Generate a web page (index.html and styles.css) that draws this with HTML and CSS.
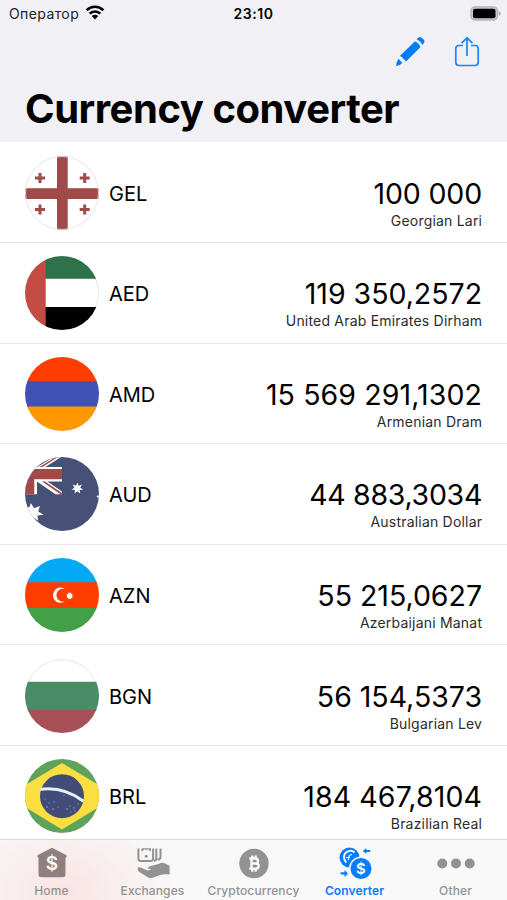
FILE: index.html
```html
<!DOCTYPE html>
<html lang="en">
<head>
<meta charset="utf-8">
<title>Currency converter</title>
<link rel="stylesheet" href="styles.css">
</head>
<body>
<div class="app">
  <header class="header">
    <div class="status">
      <div class="carrier"><span>Оператор</span>
        <svg class="wifi" width="20" height="15" viewBox="0 0 20 15"><g fill="none" stroke="#000" stroke-width="2.6"><path d="M1.6 5.2a12 12 0 0 1 16.8 0"/><path d="M4.7 8.6a7.6 7.6 0 0 1 10.6 0"/></g><path d="M6.8 11a4.6 4.6 0 0 1 6.4 0L10 14.4z"/></svg>
      </div>
      <div class="clock">23:10</div>
      <svg class="battery" width="31" height="15" viewBox="0 0 31 15"><rect x="1" y=".8" width="26.500" height="13.400" rx="4" fill="#c9c9cb" stroke="#b5b5b7" stroke-width="1.300"/><rect x="3" y="2.800" width="22.500" height="9.400" rx="2" fill="#000"/><path d="M28.800 5q2 .7 2 2.500t-2 2.500z" fill="#a9a9ab"/></svg>
    </div>
    <div class="actions">
      <svg width="32" height="32" viewBox="0 0 32 32" fill="#007aff"><path d="M22.600 3.200l2-1.700q1.600-1.100 3.200.4l1.800 1.700q1.600 1.600.5 3.200l-1.900 2.300q-1-3.700-5.600-5.900zM20.800 5.600q4 1.400 5.700 5.500L12 25.400q-1.200-.3-1.500-2-1.800-.3-2.100-2.100-1.700-.3-2.300-1.500zM4.600 22.800l3.700 4.300q-2.100 2.500-6.200 2.800.2-4.200 2.500-7.100z"/></svg>
      <svg width="26" height="32" viewBox="0 0 26 32" fill="none" stroke="#1a86fb" stroke-width="1.700"><path d="M9 9.500H5Q1.800 9.500 1.800 12.700v13.600Q1.800 29.500 5 29.500h16q3.200 0 3.200-3.200V12.700q0-3.200-3.200-3.200h-4"/><path d="M13 20V2.200M7.600 7.200L13 1.800l5.400 5.400"/></svg>
    </div>
    <h1>Currency converter</h1>
  </header>

  <main class="list">
    <div class="row">
      <svg class="flag" viewBox="0 0 74 74"><path fill="#fff" d="M0 0h74v74H0z"/><path fill="#a04a4a" d="M32 0h10.700v74H32zM0 32.300h74V43H0zM13.500 17h3v3.500H20v3h-3.500V27h-3v-3.500H10v-3h3.500zM58.200 17h3v3.500h3.500v3h-3.500V27h-3v-3.500h-3.500v-3h3.500zM13.500 48.400h3v3.500H20v3h-3.500v3.500h-3v-3.500H10v-3h3.500zM58.200 48.400h3v3.500h3.500v3h-3.500v3.500h-3v-3.500h-3.500v-3h3.500z"/><circle class="rim" cx="37" cy="37" r="36.500"/></svg>
      <span class="code">GEL</span>
      <div class="value"><strong>100 000</strong><small>Georgian Lari</small></div>
    </div>
    <div class="row">
      <svg class="flag" viewBox="0 0 74 74"><path fill="#fff" d="M0 0h74v74H0z"/><circle class="rim" cx="37" cy="37" r="36.500"/><path fill="#2f7149" d="M20 0h54v22.700H20z"/><path d="M20 51h54v23H20z"/><path fill="#c44b43" d="M0 0h20.700v74H0z"/></svg>
      <span class="code">AED</span>
      <div class="value"><strong class="medium">119 350,2572</strong><small>United Arab Emirates Dirham</small></div>
    </div>
    <div class="row">
      <svg class="flag" viewBox="0 0 74 74"><path fill="#ff3d00" d="M0 0h74v25H0z"/><path fill="#3f51b5" d="M0 24.200h74v26H0z"/><path fill="#ff9800" d="M0 49.500h74V74H0z"/></svg>
      <span class="code">AMD</span>
      <div class="value"><strong class="loose">15 569 291,1302</strong><small>Armenian Dram</small></div>
    </div>
    <div class="row">
      <svg class="flag" viewBox="0 0 74 74"><path fill="#475177" d="M0 0h74v74H0z"/><path fill="#fff" d="M12 10.200L28.500 0H36L20 10.200zM0 10h37v14.500H12V37.300H0zM12 21l6 .5 19 13v2.800h-6.500L12 24.500z"/><path fill="#a04a4a" d="M0 12h37v10.200H9.300v15.100H0zM14.500 10L30.500 0h2.300L17.500 10zM17 24.500h3L37 36v1.300h-1.500z"/><path fill="#fff" d="M52.300 25.500l1.300 3.300 3.400-1.200-1.800 3.100 3 1.900-3.500.4.500 3.600-2.900-2.300-2.700 2.300.4-3.600-3.500-.4 3-1.900-1.900-3.100 3.500 1.200zM5.800 46l3.300 5.300 5.800-2.200-1.700 5.400 5.500 3.300-6.300.6.800 5.400-5.400-3.700L3 64l-3-8 1-7 3.300 1.500zM71.600 39.200l1-.8 1.400.1v2.100l-1.600-.1z"/></svg>
      <span class="code">AUD</span>
      <div class="value"><strong class="tight">44 883,3034</strong><small>Australian Dollar</small></div>
    </div>
    <div class="row">
      <svg class="flag" viewBox="0 0 74 74"><path fill="#03a9f4" d="M0 0h74v25H0z"/><path fill="#ff3d00" d="M0 24.200h74v26H0z"/><path fill="#43a047" d="M0 50h74v24H0z"/><path fill="#fff" d="M40.300 31.300a7.600 7.600 0 1 0 0 11.800 6.400 6.400 0 1 1 0-11.800zM43.700 34l1 1.200 1.400-.6.200 1.500 1.500.4-.6 1.400.7 1.400-1.500.4-.3 1.500-1.400-.7-1.400.7-.3-1.500-1.500-.5.700-1.300-.7-1.400 1.600-.4z"/></svg>
      <span class="code">AZN</span>
      <div class="value"><strong class="medium">55 215,0627</strong><small>Azerbaijani Manat</small></div>
    </div>
    <div class="row">
      <svg class="flag" viewBox="0 0 74 74"><path fill="#fff" d="M0 0h74v74H0z"/><circle class="rim" cx="37" cy="37" r="36.500"/><path fill="#4a8c68" d="M0 22.700h74v28.500H0z"/><path fill="#a75058" d="M0 50.700h74V74H0z"/></svg>
      <span class="code">BGN</span>
      <div class="value"><strong class="medium">56 154,5373</strong><small>Bulgarian Lev</small></div>
    </div>
    <div class="row">
      <svg class="flag" viewBox="0 0 74 74"><path fill="#5fa35a" d="M0 0h74v74H0z"/><path fill="#fbdf42" d="M37 4l55 33-55 33.500L-18 37z"/><circle cx="37" cy="37.200" r="22" fill="#414c78"/><path d="M15.600 30.300Q39 27.500 58.500 42.300" fill="none" stroke="#e4f2f2" stroke-width="3"/><g fill="#a9b2cd"><circle cx="20" cy="40" r=".6"/><circle cx="24" cy="44" r=".6"/><circle cx="22" cy="48" r=".7"/><circle cx="29" cy="43" r=".6"/><circle cx="28" cy="50" r=".7"/><circle cx="33" cy="48" r=".5"/><circle cx="39" cy="36.500" r=".6"/><circle cx="42" cy="50" r=".7"/><circle cx="46" cy="53" r=".6"/><circle cx="49" cy="49" r=".7"/><circle cx="53" cy="45" r=".6"/><circle cx="50" cy="52" r=".6"/><circle cx="45" cy="47" r=".5"/></g></svg>
      <span class="code">BRL</span>
      <div class="value"><strong class="loose">184 467,8104</strong><small>Brazilian Real</small></div>
    </div>
  </main>

  <nav class="tabs">
    <a class="tab home"><svg viewBox="0 0 34 34"><path fill="currentColor" d="M17 .7l14.500 7.500v2.200h-1V27.500q0 2.700-3 2.700h-21q-3 0-3-2.700V10.400h-1V8.200z"/><text class="coin" x="17" y="22.500" font-size="19">$</text></svg><span>Home</span></a>
    <a class="tab"><svg viewBox="0 0 34 34"><path fill="none" stroke="currentColor" stroke-width="2" d="M2.400 1.500v10q0 2.600 2.600 2.600h9.500q2.600 0 2.600-2.600v-10M20.300 1.500V11q0 2.500-2.200 3M24.500 1.500V10q0 2.300-3 2.700"/><path fill="currentColor" d="M5.500 1.200h2.800q0 2.500-2.800 3zM8 1.200h4.500l-.8 1.600H8.800zM15 1.200h-2.800q0 2.500 2.800 3zM1.700 20.500q1.600-.7 3.500.3l6 2.700q2.200-.3 4.200-1.500l-3.800-.6q.4-2 3-2.500l8-1.800q3-2.200 5.800-.8l5.200 2.400v8.800q-4.400-.6-8.500.3l-8.400 3q-2 .7-4 0L3.300 25q-2.300-1.800-1.600-4.500z"/><circle cx="10.200" cy="9.300" r="1.500" fill="currentColor"/></svg><span>Exchanges</span></a>
    <a class="tab"><svg viewBox="0 0 34 34"><circle cx="17" cy="16.500" r="14.700" fill="currentColor"/><path fill="none" stroke="#fafafa" stroke-width="2.300" d="M12.300 11.500h6.200q2.500.2 2.500 2.500T18.500 16.500h-4 4.500q2.700.2 2.700 2.600T19 21.700h-6.700M14.500 11.500v10.200M15.300 8.500v3M18.700 8.500v3M15.300 21.700v3M18.700 21.700v3"/></svg><span>Cryptocurrency</span></a>
    <a class="tab active"><svg viewBox="0 0 34 34"><circle cx="11.500" cy="10.500" r="10" fill="currentColor"/><path d="M16.500 5.500A6.300 6.300 0 0 0 6 9.500q-.3 3.500 2.300 6.200" fill="none" stroke="#f8f8f8" stroke-width="1.900"/><path d="M14 7.500Q10 8 10.500 13M8 10.500h4" fill="none" stroke="#f8f8f8" stroke-width="1.200"/><circle cx="23" cy="21.500" r="12" fill="#f8f8f8"/><circle cx="23" cy="21.500" r="10.500" fill="currentColor"/><text class="coin" x="23" y="26.800" font-size="15">$</text><path fill="currentColor" d="M24.800 4l3.500-3v2h4v2h-4v2zM10 26.500L6.500 23v2.300H2.600v2.200h3.900V30z"/></svg><span>Converter</span></a>
    <a class="tab"><svg viewBox="0 0 38 34" class="wide"><g fill="currentColor"><circle cx="5.300" cy="16.500" r="5"/><circle cx="19" cy="16.500" r="5"/><circle cx="32.700" cy="16.500" r="5"/></g></svg><span>Other</span></a>
  </nav>
</div>
</body>
</html>
```
FILE: styles.css
```css
* { box-sizing: border-box; }
body { margin: 0; background: #fff; color: #000; font-family: Inter, "Liberation Sans", sans-serif; }
.app { width: 507px; height: 900px; display: flex; flex-direction: column; overflow: hidden; }
.header { height: 142px; flex: none; background: #f1f0f5; }
.status { display: grid; grid-template-columns: 1fr auto 1fr; align-items: center; height: 27px; padding: 0 6px 0 9px; font-size: 14px; }
.carrier { display: flex; align-items: center; gap: 6px; color: #222; letter-spacing: 0.4px; }
.wifi { margin-top: -2px; }
.clock { margin-right: 3px; font-weight: 600; letter-spacing: 0.6px; }
.battery { justify-self: end; margin-top: -1px; }
.actions { display: flex; justify-content: flex-end; gap: 28px; height: 50px; padding: 9px 27px 0 0; }
h1 { margin: 9px 0 0 25px; font-size: 40px; line-height: 46px; font-weight: 700; letter-spacing: -0.45px; white-space: nowrap; }
.list { flex: 1; min-height: 0; overflow: hidden; padding-top: 0.4px; }
.row { display: flex; align-items: center; height: 100.6px; padding: 1px 25px 0; border-bottom: 1px solid #e8e8ea; }
.flag { width: 74px; height: 74px; border-radius: 50%; flex: none; }
.rim { fill: none; stroke: #e2e2e2; stroke-width: 1; }
.code { margin: 2px 0 0 10px; font-size: 20px; line-height: 26px; }
.value { margin-left: auto; display: flex; flex-direction: column; align-items: flex-end; padding-top: 22px; white-space: nowrap; }
.value strong { font-size: 28.500px; line-height: 34px; font-weight: 400; letter-spacing: -0.15px; }
.value .tight { letter-spacing: -0.3px; }
.value .medium { letter-spacing: -0.02px; }
.value .loose { letter-spacing: 0.1px; }
.value small { font-size: 14px; line-height: 20px; color: #2c2c2c; letter-spacing: 0.2px; margin-right: -0.2px; }
.tabs { flex: none; height: 61px; display: flex; padding: 0 1px; border-top: 1px solid #d9d9d9; background: radial-gradient(ellipse 110px 80px at 65px 50px, #fae4e4, #f8f8f8); }
.tab { flex: 1; display: flex; flex-direction: column; align-items: center; padding-top: 7px; color: #929292; font-size: 12px; font-weight: 500; line-height: 16px; letter-spacing: 0.12px; white-space: nowrap; }
.tab svg { width: 34px; height: 34px; flex: none; }
.tab svg.wide { width: 38px; }
.tab span { margin-top: 2px; }
.home svg { color: #8f8080; }
.active { color: #087cff; font-weight: 600; }
.coin { fill: #fafafa; font-weight: 600; letter-spacing: 0; text-anchor: middle; }
```
